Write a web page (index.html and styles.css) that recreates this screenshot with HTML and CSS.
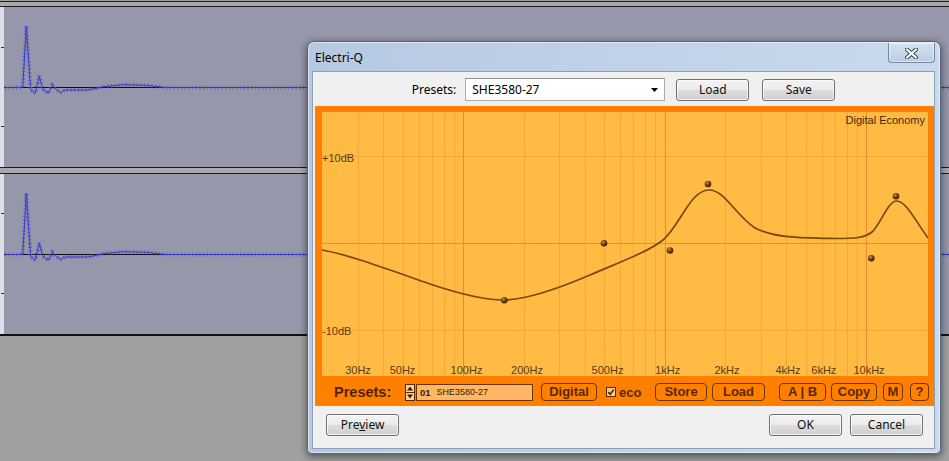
FILE: index.html
```html
<!DOCTYPE html>
<html>
<head>
<meta charset="utf-8">
<title>Electri-Q</title>
<link rel="stylesheet" href="styles.css">
</head>
<body>
<div class="desk">
  <div class="topband"></div>
  <div class="track">
    <div class="ruler"><svg width="4" height="160"><path d="M1 40.5H4M1 119.5H4" stroke="#333" stroke-width="1"/></svg></div>
    <svg class="wave" width="945" height="160" viewBox="0 0 945 160">
      <path d="M0 80.5H945" stroke="#111" stroke-width="1"/>
      <polyline points="1,80.5 18.7,80.5 22.3,19 26.7,83 31.3,86.3 35.3,69 38.7,82.3 44.3,86.3 48.3,78.3 52,81.7 56,85.7 61,83 82.7,83 92.7,81.3 99.3,79.7 119,77.7 142.7,78.3 161,80.5 945,80.5" fill="none" stroke="#3636c4" stroke-width="1"/>
      <polyline points="1,80.5 18.7,80.5 22.3,19 26.7,83 31.3,86.3 35.3,69 38.7,82.3 44.3,86.3 48.3,78.3 52,81.7 56,85.7 61,83 82.7,83 92.7,81.3 99.3,79.7 119,77.7 142.7,78.3 161,80.5 945,80.5" fill="none" stroke="#4a4acc" stroke-width="4" stroke-dasharray="1 2.7" opacity="0.75"/>
    </svg>
  </div>
  <div class="sep"></div>
  <div class="track">
    <div class="ruler"><svg width="4" height="160"><path d="M1 39.5H4M1 119.5H4" stroke="#333" stroke-width="1"/></svg></div>
    <svg class="wave" width="945" height="160" viewBox="0 0 945 160">
      <path d="M0 80.5H945" stroke="#111" stroke-width="1"/>
      <polyline points="1,80.5 18.7,80.5 22.3,19 26.7,83 31.3,86.3 35.3,69 38.7,82.3 44.3,86.3 48.3,78.3 52,81.7 56,85.7 61,83 82.7,83 92.7,81.3 99.3,79.7 119,77.7 142.7,78.3 161,80.5 945,80.5" fill="none" stroke="#3636c4" stroke-width="1"/>
      <polyline points="1,80.5 18.7,80.5 22.3,19 26.7,83 31.3,86.3 35.3,69 38.7,82.3 44.3,86.3 48.3,78.3 52,81.7 56,85.7 61,83 82.7,83 92.7,81.3 99.3,79.7 119,77.7 142.7,78.3 161,80.5 945,80.5" fill="none" stroke="#4a4acc" stroke-width="4" stroke-dasharray="1 2.7" opacity="0.75"/>
    </svg>
  </div>
  <div class="endline"></div>
</div>

<div class="dialog">
  <div class="titlebar">
    <span class="title">Electri-Q</span>
    <div class="close">
      <svg width="13" height="11" viewBox="0 0 13 11">
        <path d="M2 1.5L11 9.5M11 1.5L2 9.5" stroke="#3b4a5e" stroke-width="4.2" stroke-linecap="round"/>
        <path d="M2 1.5L11 9.5M11 1.5L2 9.5" stroke="#ffffff" stroke-width="2.2" stroke-linecap="round"/>
      </svg>
    </div>
  </div>
  <div class="client">
    <div class="presetrow">
      <span class="plabel">Presets:</span>
      <div class="combo">
        <span class="combotext">SHE3580-27</span>
        <svg class="comboarrow" width="7" height="4" viewBox="0 0 7 4"><path d="M0 0H7L3.5 4Z" fill="#000"/></svg>
      </div>
      <button class="wbtn load">Load</button>
      <button class="wbtn">Save</button>
    </div>

    <div class="eqpanel">
      <svg class="graph" width="606" height="264" viewBox="0 0 606 264">
        <defs>
          <radialGradient id="dot" cx="38%" cy="32%" r="70%">
            <stop offset="0" stop-color="#c99055"/>
            <stop offset="0.5" stop-color="#6f3e10"/>
            <stop offset="1" stop-color="#3c1f02"/>
          </radialGradient>
        </defs>
        <rect width="606" height="264" fill="#ffbb44"/>
        <path stroke="#f6a836" stroke-width="1" fill="none" d="M36.5 0V264M61.5 0V264M81.5 0V264M97.5 0V264M110.5 0V264M122.5 0V264M132.5 0V264M202.5 0V264M237.5 0V264M263.5 0V264M282.5 0V264M298.5 0V264M311.5 0V264M323.5 0V264M333.5 0V264M403.5 0V264M439.5 0V264M464.5 0V264M484.5 0V264M500.5 0V264M513.5 0V264M525.5 0V264M535.5 0V264M0 44.5H606M0 218.5H606"/>
        <path stroke="#eb8d29" stroke-width="1" fill="none" d="M141.5 0V264M343.5 0V264M544.5 0V264M0 131.5H606"/>
        <g class="glabel">
          <text x="0" y="49.5">+10dB</text>
          <text x="0" y="222.5">-10dB</text>
          <text class="mode" x="603" y="12" text-anchor="end">Digital Economy</text>
          <g text-anchor="middle">
            <text x="36" y="262">30Hz</text>
            <text x="80.5" y="262">50Hz</text>
            <text x="144.5" y="262">100Hz</text>
            <text x="205" y="262">200Hz</text>
            <text x="285.5" y="262">500Hz</text>
            <text x="345.7" y="262">1kHz</text>
            <text x="405" y="262">2kHz</text>
            <text x="466" y="262">4kHz</text>
            <text x="501.8" y="262">6kHz</text>
            <text x="547" y="262">10kHz</text>
          </g>
        </g>
        <path fill="none" stroke="#7b4809" stroke-width="1.7" d="M0,138 C28,143 68,158 108,172 C138,182 163,188 181,188 C203,188 233,178 268,163 C298,150 326,140 341,128 C358,114 368,78 387,78 C403,78 413,103 433,116 C453,126 478,126 513,126.5 C533,126.5 543,126 550,120 C558,113 566,89 574.5,89 C584,89 593,108 606,126"/>
        <g fill="url(#dot)">
          <circle cx="182.3" cy="188.3" r="3.3"/>
          <circle cx="282" cy="131.3" r="3.3"/>
          <circle cx="348" cy="138.5" r="3.3"/>
          <circle cx="386" cy="72" r="3.3"/>
          <circle cx="549.3" cy="146.3" r="3.3"/>
          <circle cx="574" cy="84.3" r="3.3"/>
        </g>
      </svg>

      <div class="eqbar">
        <span class="blabel">Presets:</span>
        <svg class="spin" width="10" height="17" viewBox="0 0 10 17">
          <rect x="0.5" y="0.5" width="9" height="16" fill="#ffd39a" stroke="#5a2a00"/>
          <path d="M0.5 8.5H9.5" stroke="#5a2a00"/>
          <path d="M2 6.5L5 2.5L8 6.5Z M2 10.5L5 14.5L8 10.5Z" fill="#3a1a00"/>
        </svg>
        <div class="pfield"><b>01</b><span>SHE3580-27</span></div>
        <button class="ebtn digital">Digital</button>
        <svg class="chk" width="10" height="10" viewBox="0 0 10 10">
          <rect x="0.5" y="0.5" width="9" height="9" fill="#ffc983" stroke="#5a2a00"/>
          <path d="M2.2 5L4.2 7.3L7.8 2.6" fill="none" stroke="#3a1a00" stroke-width="1.4"/>
        </svg>
        <span class="eco">eco</span>
        <button class="ebtn store">Store</button>
        <button class="ebtn eload">Load</button>
        <button class="ebtn ab">A | B</button>
        <button class="ebtn copy">Copy</button>
        <button class="ebtn m">M</button>
        <button class="ebtn q">?</button>
      </div>
    </div>

    <div class="footer">
      <button class="wbtn">Pre<u>v</u>iew</button>
      <button class="wbtn ok">OK</button>
      <button class="wbtn cancel">Cancel</button>
    </div>
  </div>
</div>
</body>
</html>
```

FILE: styles.css
```css
* { box-sizing: border-box; }
html, body { margin: 0; padding: 0; }
body {
  width: 949px;
  height: 461px;
  overflow: hidden;
  position: relative;
  background: #a0a0a0;
  font-family: "Noto Sans", "Liberation Sans", sans-serif;
}
svg { display: block; }

/* background tracks */
.desk { display: flex; flex-direction: column; }
.topband {
  margin-top: 1px;
  height: 6px;
  border-top: 1px solid #1c1c1c;
  border-bottom: 1px solid #1c1c1c;
  background: #a9a9a9;
}
.track { display: flex; height: 160px; background: #9797ab; }
.ruler { width: 4px; background: #dedee8; }
.sep {
  height: 7px;
  border-top: 1px solid #1c1c1c;
  border-bottom: 1px solid #1c1c1c;
  background: #a9a9a9;
}
.endline { height: 2px; background: #111; }

/* dialog window */
.dialog {
  position: absolute;
  left: 307px;
  top: 41px;
  width: 634px;
  height: 413px;
  border: 1px solid #55657a;
  border-radius: 7px 7px 5px 5px;
  background: linear-gradient(to right, #b5c9e2 0%, #c2d3e9 60%, #cad9ec 100%);
  box-shadow: 0 2px 7px 1px rgba(0,0,0,0.45), inset 0 0 0 1px rgba(255,255,255,0.5);
  padding: 0 5px 4px 4px;
  display: flex;
  flex-direction: column;
}
.titlebar {
  height: 29px;
  display: flex;
  align-items: center;
  padding: 2px 0 0 3px;
}
.title { font-size: 12px; color: #000; }
.close {
  margin-left: auto;
  align-self: flex-start;
  margin-top: -1px;
  width: 47px;
  height: 20px;
  border: 1px solid rgba(60,80,110,0.6);
  border-top: none;
  border-radius: 0 0 4px 4px;
  background: linear-gradient(#d5e1ef, #bccde3);
  box-shadow: inset 0 0 0 1px rgba(255,255,255,0.45);
  display: flex;
  align-items: center;
  justify-content: center;
  padding-top: 1px;
}
.client {
  flex: 1;
  background: #f0f0f0;
  border: 1px solid #8e9eb4;
  display: flex;
  flex-direction: column;
}

/* preset row */
.presetrow {
  height: 34px;
  display: flex;
  align-items: center;
  justify-content: center;
  padding-top: 1px;
}
.plabel { font-size: 12px; color: #000; margin-right: 9px; }
.combo {
  width: 200px;
  height: 23px;
  background: #fff;
  border: 1px solid #abadb3;
  border-top-color: #8e9196;
  display: flex;
  align-items: center;
  padding: 0 6px 0 6px;
  margin-right: 11px;
}
.combotext { font-size: 12px; color: #000; flex: 1; }
.comboarrow { margin-right: 0; }

.wbtn {
  width: 73px;
  height: 22px;
  padding: 0;
  border: 1px solid #707070;
  border-radius: 3px;
  background: linear-gradient(#f3f3f3 0%, #ebebeb 48%, #dcdcdc 52%, #cfcfcf 100%);
  box-shadow: inset 0 0 0 1px rgba(255,255,255,0.75);
  font-family: "Noto Sans", "Liberation Sans", sans-serif;
  font-size: 12px;
  color: #111;
  line-height: 18px;
}
.wbtn u { text-decoration: underline; }
.load { margin-right: 13px; }

/* equalizer panel */
.eqpanel {
  margin-left: 2px;
  width: 619px;
  height: 300px;
  background: #ff8000;
  padding: 6px 6px 0 7px;
  display: flex;
  flex-direction: column;
}
.glabel text {
  font-family: "Liberation Sans", Arial, sans-serif;
  font-size: 11px;
  fill: #5a3c14;
}
.glabel text.mode { fill: #3c2a14; }

.eqbar {
  height: 30px;
  margin: 0 -6px 0 -7px;
  padding: 2px 0 0 19px;
  display: flex;
  align-items: center;
  font-family: "Liberation Sans", Arial, sans-serif;
  color: #5a2800;
}
.blabel {
  width: 58px;
  font-size: 14.5px;
  font-weight: bold;
  color: #512400;
  margin-right: 13px;
}
.spin { margin-right: 1px; }
.pfield {
  width: 117px;
  height: 17px;
  background: #ffb766;
  border: 1px solid #6a3300;
  display: flex;
  align-items: center;
  padding-left: 3px;
  font-size: 9px;
  color: #3a1a00;
}
.pfield b { font-size: 9.5px; margin-right: 6px; }
.ebtn {
  height: 18px;
  padding: 0;
  border: 1px solid #6e3400;
  border-radius: 4px;
  background: transparent;
  font-family: "Liberation Sans", Arial, sans-serif;
  font-size: 13px;
  font-weight: bold;
  color: #5a2800;
  line-height: 16px;
  text-align: center;
}
.digital { width: 56px; margin-left: 8px; }
.chk { margin-left: 9px; }
.eco { width: 24px; margin-left: 3px; font-size: 13px; font-weight: bold; color: #5a2800; }
.store { width: 52px; margin-left: 12px; }
.eload { width: 53px; margin-left: 5px; }
.ab { width: 47px; margin-left: 14px; }
.copy { width: 46px; margin-left: 5px; }
.m { width: 20px; margin-left: 6px; }
.q { width: 19px; margin-left: 7px; }

/* footer */
.footer {
  flex: 1;
  display: flex;
  align-items: flex-start;
  padding: 8px 11px 0 13px;
}
.ok { margin-left: auto; margin-right: 8px; }
```
